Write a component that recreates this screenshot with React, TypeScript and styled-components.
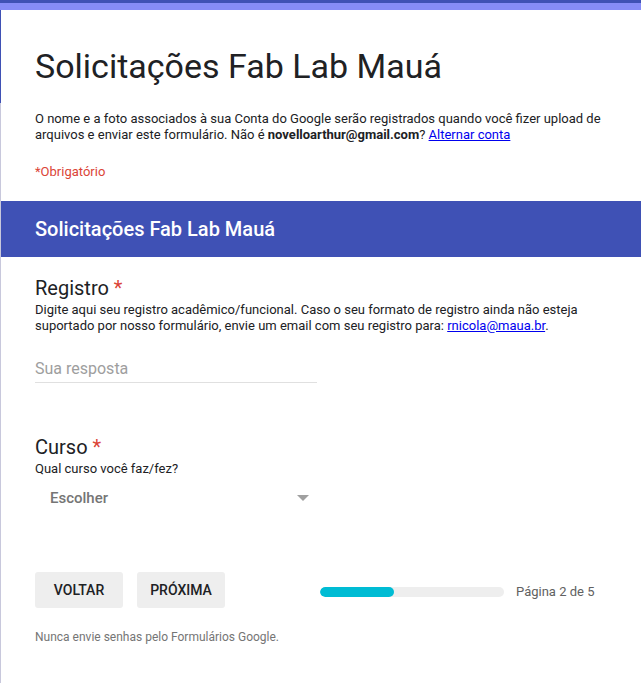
import React from "react";
import styled, { createGlobalStyle } from "styled-components";

const GlobalStyle = createGlobalStyle`
  html, body { margin: 0; padding: 0; background: #fff; }
  body { font-family: Roboto, "Liberation Sans", Arial, sans-serif; color: #202124; }
  * { box-sizing: border-box; }
`;

const Page = styled.div`
  min-height: 683px;
  background:
    linear-gradient(#3f51b5, #3f51b5) left top / 1px 103px no-repeat,
    linear-gradient(#c8c8dc, #c8c8dc) left top / 1px 100% no-repeat,
    #fff;
  overflow: hidden;
`;

const TopBar = styled.div`
  height: 10px;
  border-top: 3px solid #3f51b5;
  background: #868cf7;
`;

const Block = styled.div`
  padding: 0 34px 0 35px;
`;

const Title = styled.h1`
  margin: 35px 0 0;
  font-size: 34px;
  line-height: 43px;
  font-weight: 400;
  color: #202124;
`;

const Notice = styled.p`
  margin: 23px 0 0;
  font-size: 13px;
  line-height: 16px;
  color: #202124;
`;

const Link = styled.a`
  color: #0000ee;
  text-decoration: underline;
`;

const Required = styled.div`
  margin-top: 21px;
  font-size: 13px;
  line-height: 16px;
  color: #db4437;
`;

const SectionBand = styled.div`
  margin: 21px 0 0 1px;
  height: 56px;
  padding-left: 34px;
  display: flex;
  align-items: center;
  background: #3f51b5;
  color: #fff;
  font-size: 20px;
  font-weight: 500;
`;

const Question = styled.div<{ $gap: number }>`
  padding: 0 34px 0 35px;
  margin-top: ${(p) => p.$gap}px;
  display: flex;
  flex-direction: column;
`;

const QTitle = styled.div`
  font-size: 20px;
  line-height: 24px;
  color: #202124;
`;

const Star = styled.span`
  color: #db4437;
`;

const QDesc = styled.div`
  margin-top: 2px;
  font-size: 13px;
  line-height: 16px;
  color: #202124;
`;

const TextInput = styled.div`
  margin-top: 25px;
  width: 282px;
  padding-bottom: 3px;
  border-bottom: 1px solid #e0e0e0;
  font-size: 16px;
  line-height: 20px;
  color: #9e9e9e;
`;

const Select = styled.div`
  margin-top: 11px;
  width: 282px;
  padding: 0 8px 0 15px;
  display: flex;
  align-items: center;
  justify-content: space-between;
  font-size: 15px;
  line-height: 20px;
  font-weight: 500;
  color: #757575;
`;

const Arrow = styled.span`
  width: 0;
  height: 0;
  border-left: 6px solid transparent;
  border-right: 6px solid transparent;
  border-top: 6px solid #a0a0a0;
`;

const NavRow = styled.div`
  margin-top: 64px;
  padding: 0 34px 0 35px;
  display: flex;
  align-items: center;
`;

const Buttons = styled.div`
  display: flex;
  gap: 14px;
`;

const Button = styled.button`
  width: 88px;
  height: 36px;
  border: none;
  border-radius: 3px;
  background: #eeeeee;
  font-family: Roboto, "Liberation Sans", Arial, sans-serif;
  font-size: 14px;
  font-weight: 500;
  color: #202124;
  padding: 0;
`;

const Progress = styled.div`
  margin-left: 95px;
  padding-top: 4px;
  display: flex;
  align-items: center;
  gap: 12px;
`;

const Track = styled.div`
  width: 184px;
  height: 10px;
  border-radius: 5px;
  background: #eeeeee;
  overflow: hidden;
`;

const Fill = styled.div`
  height: 100%;
  border-radius: 5px;
  background: #00bcd4;
`;

const PageLabel = styled.span`
  font-size: 13px;
  line-height: 16px;
  color: #616161;
`;

const Footer = styled.div`
  margin-top: 21px;
  padding: 0 34px 0 35px;
  font-size: 12px;
  line-height: 16px;
  color: #757575;
`;

export default function App() {
  const current = 2;
  const total = 5;
  return (
    <>
      <GlobalStyle />
      <Page>
        <TopBar />
        <Block>
          <Title>Solicitações Fab Lab Mauá</Title>
          <Notice>
            O nome e a foto associados à sua Conta do Google serão registrados quando você fizer upload de
            arquivos e enviar este formulário. Não é <b>novelloarthur@gmail.com</b>?{" "}
            <Link href="#">Alternar conta</Link>
          </Notice>
          <Required>*Obrigatório</Required>
        </Block>
        <SectionBand>Solicitações Fab Lab Mauá</SectionBand>
        <Question $gap={19}>
          <QTitle>
            Registro <Star>*</Star>
          </QTitle>
          <QDesc>
            Digite aqui seu registro acadêmico/funcional. Caso o seu formato de registro ainda não esteja
            suportado por nosso formulário, envie um email com seu registro para:{" "}
            <Link href="#">rnicola@maua.br</Link>.
          </QDesc>
          <TextInput>Sua resposta</TextInput>
        </Question>
        <Question $gap={52}>
          <QTitle>
            Curso <Star>*</Star>
          </QTitle>
          <QDesc>Qual curso você faz/fez?</QDesc>
          <Select>
            <span>Escolher</span>
            <Arrow />
          </Select>
        </Question>
        <NavRow>
          <Buttons>
            <Button>VOLTAR</Button>
            <Button>PRÓXIMA</Button>
          </Buttons>
          <Progress>
            <Track>
              <Fill style={{ width: `${(74 / 184) * 100}%` }} />
            </Track>
            <PageLabel>
              Página {current} de {total}
            </PageLabel>
          </Progress>
        </NavRow>
        <Footer>Nunca envie senhas pelo Formulários Google.</Footer>
      </Page>
    </>
  );
}
